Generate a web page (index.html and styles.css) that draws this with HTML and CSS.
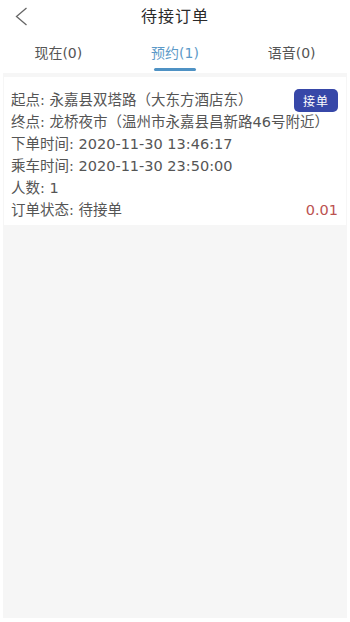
FILE: index.html
```html
<!DOCTYPE html>
<html lang="zh-CN">
<head>
<meta charset="utf-8">
<link rel="stylesheet" href="styles.css">
</head>
<body>
<div class="page">
  <header class="topbar">
    <span class="back">
      <svg width="14" height="19" viewBox="0 0 14 19"><path d="M12.5 1 L2.5 9.5 L12.5 18" fill="none" stroke="#666" stroke-width="1.3"/></svg>
    </span>
    <h1 class="title">待接订单</h1>
  </header>
  <nav class="tabs">
    <div class="tab">现在(0)</div>
    <div class="tab active">预约(1)</div>
    <div class="tab">语音(0)</div>
  </nav>
  <main class="list">
    <section class="card">
      <div class="row first">
        <span>起点: 永嘉县双塔路（大东方酒店东）</span>
        <button class="accept">接单</button>
      </div>
      <div class="row">终点: 龙桥夜市（温州市永嘉县昌新路46号附近）</div>
      <div class="row">下单时间: 2020-11-30 13:46:17</div>
      <div class="row">乘车时间: 2020-11-30 23:50:00</div>
      <div class="row">人数: 1</div>
      <div class="row">
        <span>订单状态: 待接单</span>
        <span class="price">0.01</span>
      </div>
    </section>
  </main>
</div>
</body>
</html>
```

FILE: styles.css
```css
* { box-sizing: border-box; }
html, body { margin: 0; padding: 0; background: #fff; }
body {
  font-family: "DejaVu Sans", "Noto Sans CJK SC", sans-serif;
  color: #555;
  width: 350px;
  height: 622px;
  overflow: hidden;
}
.page { display: flex; flex-direction: column; height: 622px; }
.topbar {
  position: relative;
  height: 33px;
  display: flex;
  align-items: center;
  justify-content: center;
  padding-bottom: 3px;
}
.back { position: absolute; left: 14px; top: 7px; display: flex; }
.title {
  margin: 0;
  font-family: "Noto Sans CJK SC", sans-serif;
  font-size: 16px;
  font-weight: 400;
  color: #2a2a2a;
  letter-spacing: 1px;
}
.tabs {
  height: 40px;
  display: flex;
}
.tab {
  flex: 1;
  display: flex;
  align-items: center;
  justify-content: center;
  font-size: 14px;
  color: #555;
  position: relative;
  padding-bottom: 2px;
}
.tab.active { color: #5c9ac8; }
.tab.active::after {
  content: "";
  position: absolute;
  left: 50%;
  bottom: 2px;
  width: 42px;
  margin-left: -21px;
  height: 3px;
  border-radius: 2px;
  background: #4f92c4;
}
.list {
  flex: 1;
  background: #f6f6f6;
  margin: 0 3px 4px;
  padding: 4px 1px;
}
.card {
  background: #fff;
  padding: 12px 8px 4px 7px;
  font-size: 14.5px;
}
.row {
  height: 22px;
  line-height: 22px;
  display: flex;
  justify-content: space-between;
  align-items: center;
  white-space: nowrap;
}
.accept {
  border: none;
  background: #3747a8;
  color: #fff;
  font-family: "Noto Sans CJK SC", sans-serif;
  font-size: 12px;
  height: 23px;
  width: 44px;
  border-radius: 5px;
  padding: 0;
  letter-spacing: 1px;
}
.price { color: #bb5250; }
```
